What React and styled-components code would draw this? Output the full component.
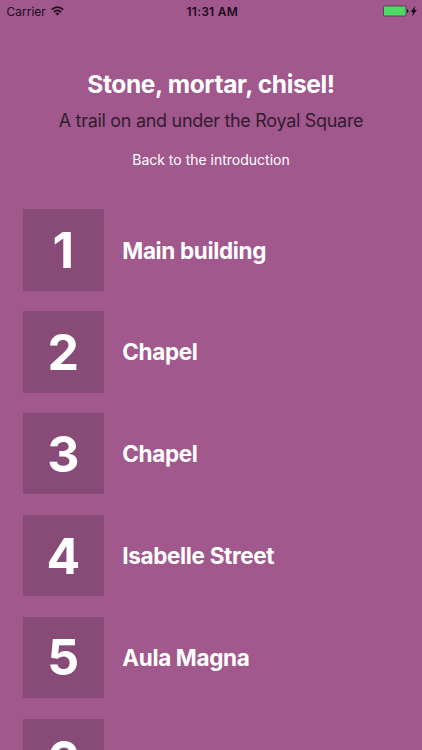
import React from "react";
import styled, { createGlobalStyle } from "styled-components";

const GlobalStyle = createGlobalStyle`
  * { box-sizing: border-box; }
  body { margin: 0; background: #a0588d; font-family: Inter, "Liberation Sans", sans-serif; overflow: hidden; }
`;
const Screen = styled.div`
  height: 750px;
  overflow: hidden;
  background: #a0588d;
  color: #fff;
`;
const StatusBar = styled.div`
  height: 22px;
  padding: 0 5px 0 6.5px;
  display: grid;
  grid-template-columns: 1fr auto 1fr;
  align-items: center;
  color: #1d0a19;
  font-size: 12px;
`;
const StatusSide = styled.div`
  display: flex;
  align-items: center;
  gap: 5px;
  justify-content: ${(p) => (p.$end ? "flex-end" : "flex-start")};
`;
const Clock = styled.div`
  font-weight: 600;
  font-size: 12px;
  letter-spacing: 0.25px;
  padding-left: 1px;
`;
const WifiIcon = styled.svg`
  width: 13px;
  height: 10px;
  margin-top: -1px;
`;
const BatteryIcon = styled.svg`
  width: 34px;
  height: 12px;
  margin-top: -1px;
`;
const Header = styled.header`
  height: 187.4px;
  padding-top: 45px;
  display: flex;
  flex-direction: column;
  align-items: center;
`;
const Title = styled.h1`
  margin: 0;
  font-size: 24.5px;
  line-height: 34px;
  font-weight: 700;
  letter-spacing: -0.35px;
`;
const Subtitle = styled.p`
  margin: 4px 0 0;
  font-size: 18px;
  line-height: 32px;
  letter-spacing: -0.3px;
  color: #341c2e;
`;
const BackLink = styled.a`
  margin-top: 11px;
  font-size: 14px;
  line-height: 24px;
`;
const StopList = styled.main`
  padding-left: 22.7px;
  display: flex;
  flex-direction: column;
  gap: 20.5px;
`;
const Stop = styled.div`
  display: flex;
  align-items: center;
  gap: 18.3px;
  height: 81.35px;
`;
const StopNumber = styled.div`
  width: 81.3px;
  height: 81.35px;
  background: #884b78;
  display: flex;
  align-items: center;
  justify-content: center;
  font-size: 50px;
  font-weight: 700;
`;
const StopName = styled.div`
  font-size: 22.5px;
  font-weight: 700;
  letter-spacing: -0.35px;
`;
const stops = ["Main building", "Chapel", "Chapel", "Isabelle Street", "Aula Magna", ""];

function Wifi() {
  return (
    <WifiIcon viewBox="0 0 13 10" fill="none" stroke="currentColor" strokeWidth="1.7">
      <path d="M0.8 3.7 Q6.5 -1.3 12.2 3.7" />
      <path d="M2.9 6.1 Q6.5 2.8 10.1 6.1" />
      <path d="M6.5 9.5 L4.4 7.4 Q6.5 5.7 8.6 7.4 Z" fill="currentColor" stroke="none" />
    </WifiIcon>
  );
}

function Battery() {
  return (
    <BatteryIcon viewBox="0 0 34 12">
      <rect x="0.5" y="1" width="22.5" height="10" rx="1.2" fill="#4cd964" stroke="#47354a" strokeWidth="0.8" />
      <path d="M24 4.2 Q25.4 4.5 25.4 6 Q25.4 7.5 24 7.8 Z" fill="#1d0a19" />
      <path d="M31.7 1.5 L28 6.9 H30.2 L29.4 10.8 L33.6 5.1 H31.3 Z" fill="#1d0a19" stroke="#1d0a19" strokeWidth="0.3" />
    </BatteryIcon>
  );
}

export default function App() {
  return (
    <Screen>
      <GlobalStyle />
      <StatusBar>
        <StatusSide>
          Carrier
          <Wifi />
        </StatusSide>
        <Clock>11:31 AM</Clock>
        <StatusSide $end>
          <Battery />
        </StatusSide>
      </StatusBar>
      <Header>
        <Title>Stone, mortar, chisel!</Title>
        <Subtitle>A trail on and under the Royal Square</Subtitle>
        <BackLink>Back to the introduction</BackLink>
      </Header>
      <StopList>
        {stops.map((name, i) => (
          <Stop key={i}>
            <StopNumber>{i + 1}</StopNumber>
            <StopName>{name}</StopName>
          </Stop>
        ))}
      </StopList>
    </Screen>
  );
}
